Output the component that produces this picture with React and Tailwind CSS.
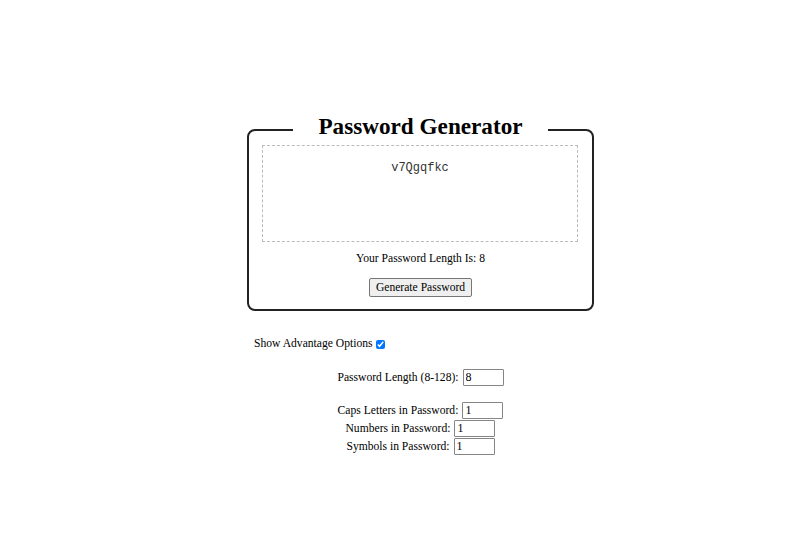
export default function App() {
  const inputCls = "ml-[4px] w-[41px] h-[17px] border border-[#858585] rounded-[1px] px-[2px] text-[12px] leading-[15px]";
  return (
    <div className="w-[797px] h-[533px] bg-white text-black" style={{ fontFamily: '"Liberation Serif", "Times New Roman", serif' }}>
      <div className="pt-[117px] pl-[247px] w-[594px]">
        <fieldset className="border-2 border-[#222] rounded-[8px] px-[13px] pt-[2px] pb-[12px] w-[347px]">
          <legend className="mx-auto px-[25px] text-[23.2px] font-bold leading-[18px] pb-[8px]">Password Generator</legend>
          <div className="border border-dashed border-[#bbb] h-[97px] w-[316px] pt-[15px] text-center text-[12px] leading-[14px] text-[#333]" style={{ fontFamily: '"Liberation Mono", "Courier New", monospace' }}>
            v7Qgqfkc
          </div>
          <div className="text-center text-[11.6px] mt-[9px] leading-[16px]">Your Password Length Is: 8</div>
          <div className="text-center mt-[11px] leading-[0]">
            <button className="text-[11.6px] leading-[15px] px-[6px] py-[1px] border border-[#767676] rounded-[2px] bg-[#efefef]">Generate Password</button>
          </div>
        </fieldset>
        <div className="mt-[25px] ml-[7px] text-[11.6px] leading-[16px] flex items-center">
          <span>Show Advantage Options</span>
          <input type="checkbox" defaultChecked className="ml-[3px] w-[9px] h-[9px] accent-[#0075ff]" />
        </div>
        <div className="text-[11.6px] leading-[17px] w-[347px]">
          <div className="flex justify-center items-center mt-[17px]">
            <span>Password Length (8-128):</span>
            <input defaultValue="8" className={inputCls} />
          </div>
          <div className="flex justify-center items-center mt-[16px]">
            <span>Caps Letters in Password:</span>
            <input defaultValue="1" className={inputCls} />
          </div>
          <div className="flex justify-center items-center mt-[1px]">
            <span>Numbers in Password:</span>
            <input defaultValue="1" className={inputCls} />
          </div>
          <div className="flex justify-center items-center mt-[1px]">
            <span>Symbols in Password:</span>
            <input defaultValue="1" className={inputCls} />
          </div>
        </div>
      </div>
    </div>
  );
}
